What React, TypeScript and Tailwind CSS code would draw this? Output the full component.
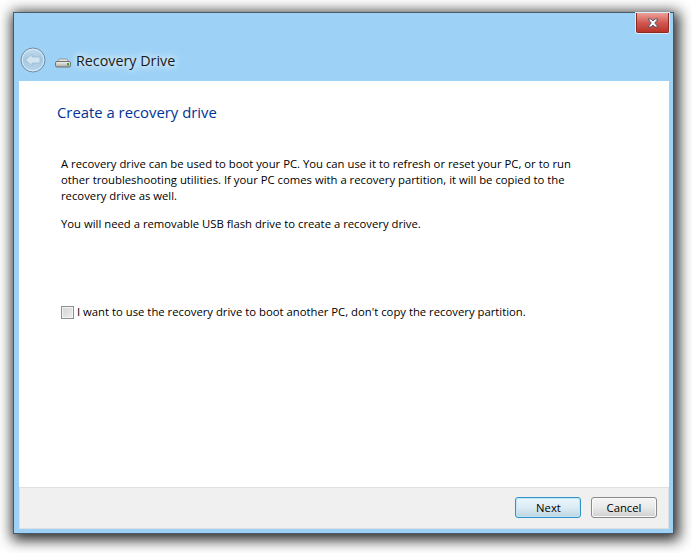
import { useState } from 'react';

function BackButton() {
  return (
    <svg width="26" height="26" viewBox="0 0 26 26" className="shrink-0">
      <defs>
        <linearGradient id="backFill" x1="0" y1="0" x2="0" y2="1">
          <stop offset="0" stopColor="#c3dcee" />
          <stop offset="0.5" stopColor="#a5c8e2" />
          <stop offset="1" stopColor="#b9d6ea" />
        </linearGradient>
      </defs>
      <circle cx="13" cy="13" r="12" fill="url(#backFill)" stroke="#6f8ba5" strokeWidth="1" />
      <circle cx="13" cy="13" r="10.8" fill="none" stroke="#dcebf6" strokeWidth="1" />
      <path d="M5.5 13 L12 7 V10 H20 V16 H12 V19 Z" fill="#d3e4f1" stroke="#9dbbd4" strokeWidth="0.8" strokeLinejoin="round" />
    </svg>
  );
}

function DriveIcon() {
  return (
    <svg width="16" height="16" viewBox="0 0 16 16" className="shrink-0">
      <defs>
        <linearGradient id="driveFill" x1="0" y1="0" x2="0" y2="1">
          <stop offset="0" stopColor="#f4f4f2" />
          <stop offset="1" stopColor="#a8a8a4" />
        </linearGradient>
      </defs>
      <path d="M2.5 7.5 L4 5 H12 L13.5 7.5 Z" fill="#e2e2de" stroke="#85858a" strokeWidth="0.7" />
      <rect x="0.5" y="7.5" width="15" height="5.5" rx="1.5" fill="url(#driveFill)" stroke="#66666a" strokeWidth="0.9" />
      <rect x="12" y="9" width="2" height="2.5" fill="#3fa23a" />
    </svg>
  );
}

function CloseButton() {
  return (
    <div className="flex h-[20px] w-[33px] items-center justify-center rounded-b-[2px] border border-t-0 border-[#8f2a22] bg-gradient-to-b from-[#e9a09a] via-[#d25a52] to-[#b8322a] shadow-[0_0_0_1px_#d9edfb]">
      <svg width="12" height="10" viewBox="0 0 12 10">
        <path
          d="M1 1 H4 L6 3 L8 1 H11 L7.8 5 L11 9 H8 L6 7 L4 9 H1 L4.2 5 Z"
          fill="#ffffff"
          stroke="#4a4f66"
          strokeWidth="0.9"
          strokeLinejoin="round"
        />
      </svg>
    </div>
  );
}

export default function App() {
  const [bootOther, setBootOther] = useState(false);

  return (
    <div className="h-[553px] w-[692px] overflow-hidden bg-white pl-[13px] pt-[12px] font-['Open_Sans','Liberation_Sans',sans-serif] text-[11.3px] text-black">
      <div className="flex h-[522px] w-[661px] flex-col border border-[#4b5a68] bg-[#9dd2f6] pb-[4px] pl-[5px] pr-[4px] shadow-[2px_3px_13px_3px_rgba(0,0,0,0.85)]">
        {/* title bar */}
        <div className="h-[68px] shrink-0">
          <div className="flex justify-end">
            <CloseButton />
          </div>
          <div className="mt-[14px] flex items-center pl-[1px]">
            <BackButton />
            <div className="ml-[9px] mt-[4px]">
              <DriveIcon />
            </div>
            <span className="ml-[5px] mt-[2px] text-[14.3px] leading-[20px] text-[#1a1a1a] [text-shadow:0_0_6px_#ffffff,0_0_10px_#ffffff]">
              Recovery Drive
            </span>
          </div>
        </div>

        {/* wizard page */}
        <div className="flex min-h-0 flex-1 flex-col bg-white">
          <div className="flex-1 pl-[38px] pt-[20px]">
            <h1 className="text-[14.85px] font-normal leading-[22px] text-[#003399]">Create a recovery drive</h1>
            <div className="ml-[4px] mt-[33px] w-[530px] leading-[16px]">
              <p>
                A recovery drive can be used to boot your PC. You can use it to refresh or reset your PC, or to run
                other troubleshooting utilities. If your PC comes with a recovery partition, it will be copied to the
                recovery drive as well.
              </p>
              <p className="mt-[12px]">You will need a removable USB flash drive to create a recovery drive.</p>
            </div>
            <label className="ml-[4px] mt-[72px] flex items-center">
              <input
                type="checkbox"
                checked={bootOther}
                onChange={(e) => setBootOther(e.target.checked)}
                className="h-[13px] w-[13px] appearance-none border border-[#8e8f8f] bg-gradient-to-br from-[#d4d4d4] to-[#eeeeee] shadow-[inset_0_0_0_1px_#f4f4f4]"
              />
              <span className="ml-[3px] leading-[16px]">
                I want to use the recovery drive to boot another PC, don&apos;t copy the recovery partition.
              </span>
            </label>
          </div>

          <div className="flex h-[42px] shrink-0 items-start justify-end gap-[10px] border border-[#dfdfdf] bg-[#f0f0f0] pr-[11px] pt-[9px]">
            <button className="h-[21px] w-[66px] rounded-[3px] border border-[#2f93c8] bg-gradient-to-b from-[#eaf6fd] via-[#dcecf5] to-[#bed3e0] pl-[1px] leading-[17px] shadow-[inset_0_0_0_1px_#bfe6f8]">
              Next
            </button>
            <button className="h-[21px] w-[66px] rounded-[3px] border border-[#8a8a8a] bg-gradient-to-b from-[#f6f6f6] via-[#e9e9e9] to-[#cfcfcf] leading-[17px] shadow-[inset_0_0_0_1px_#f8f8f8]">
              Cancel
            </button>
          </div>
        </div>
      </div>
    </div>
  );
}
